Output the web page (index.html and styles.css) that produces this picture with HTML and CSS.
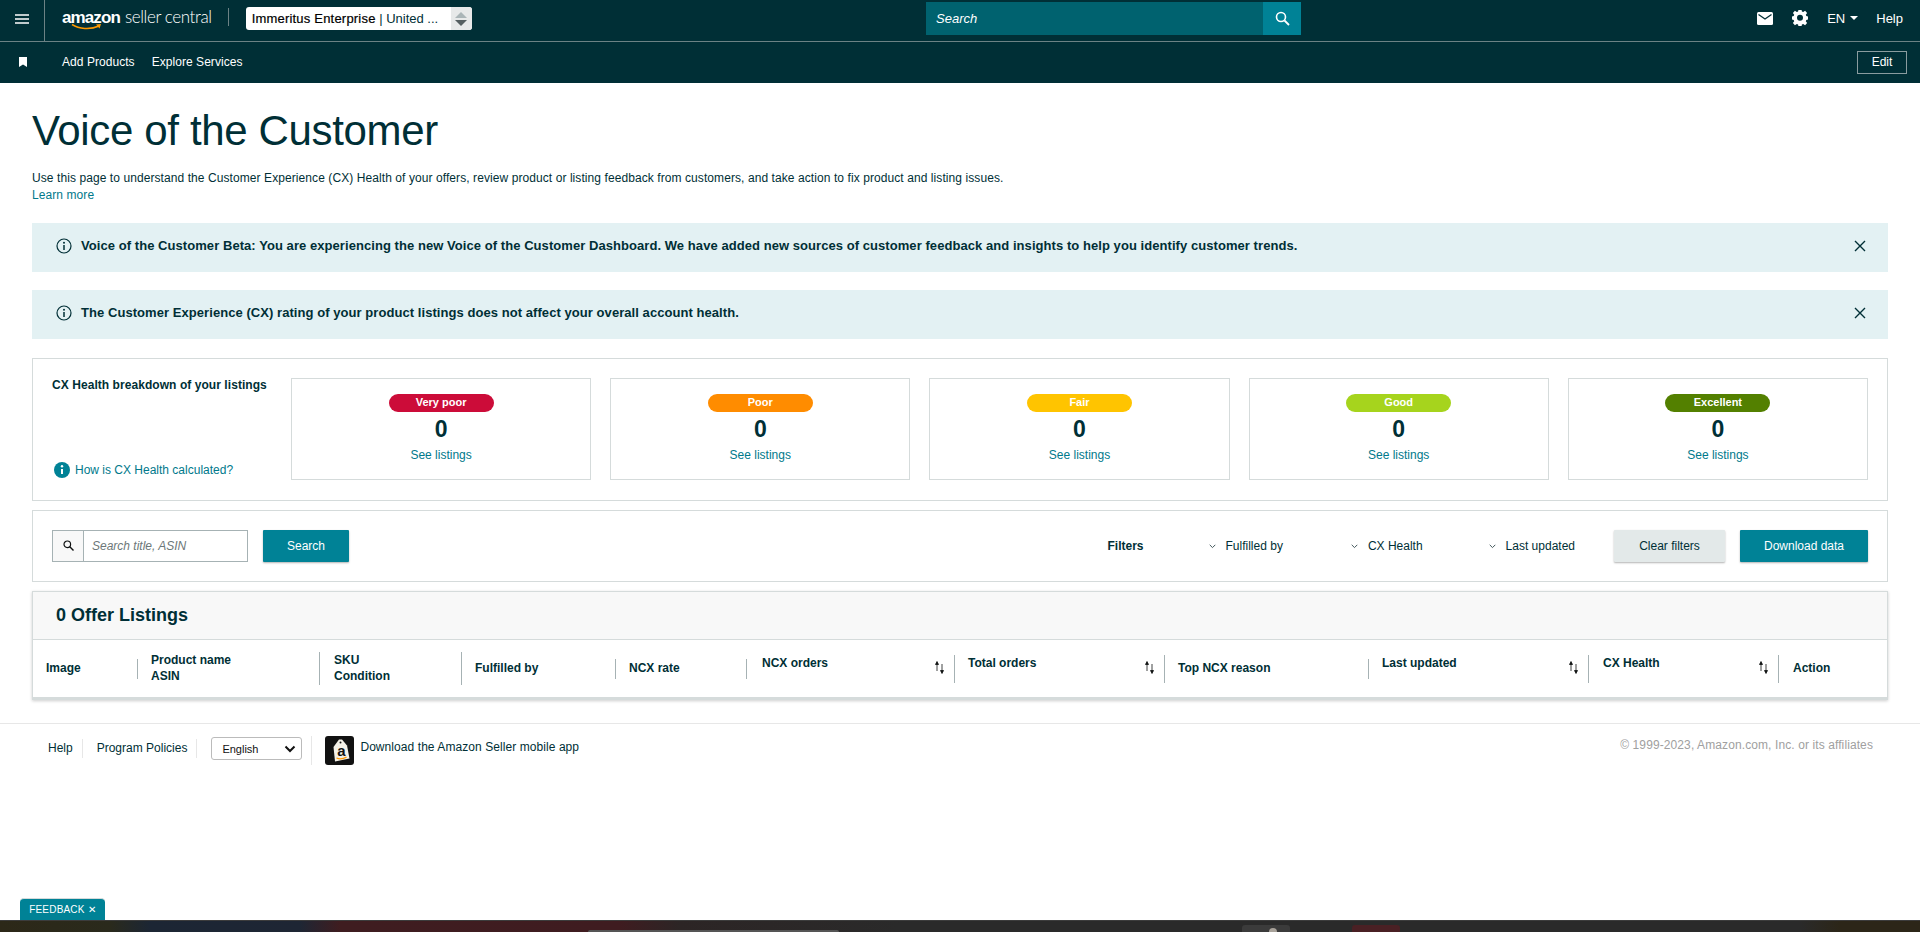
FILE: index.html
```html
<!DOCTYPE html>
<html lang="en">
<head>
  <meta charset="UTF-8">
  <title>Voice of the Customer</title>
  <link rel="stylesheet" href="styles.css">
</head>
<body>

<!-- top nav -->
<div class="header">
  <div class="header-top">
    <button class="menu-btn" aria-label="Menu">
      <svg width="14" height="10" viewBox="0 0 14 10"><path d="M0 1h14M0 5h14M0 9h14" stroke="#fff" stroke-width="1.6"/></svg>
    </button>
    <a href="#" class="logo">
      <b>amazon</b><span>seller central</span>
      <svg class="smile" width="32" height="8" viewBox="0 0 32 8"><path d="M1 1.500C8 6 19 7 28 3" fill="none" stroke="#f90" stroke-width="1.500"/><path d="M25 1.500l5-.5-1.500 4.500z" fill="#f90"/></svg>
    </a>
    <div class="account-select">
      <div class="account-name"><b>Immeritus Enterprise</b> | United ...</div>
      <div class="stepper"><i class="up"></i><i class="down"></i></div>
    </div>
    <div class="top-search">
      <div class="top-search-input">Search</div>
      <button class="top-search-btn" aria-label="Search">
        <svg width="15" height="15" viewBox="0 0 15 15"><circle cx="6" cy="6" r="4.500" fill="none" stroke="#fff" stroke-width="1.600"/><path d="M9.500 9.500l4.500 4.500" stroke="#fff" stroke-width="1.800"/></svg>
      </button>
    </div>
    <div class="top-right">
      <svg width="16" height="13" viewBox="0 0 16 13"><rect width="16" height="13" rx="1.500" fill="#fff"/><path d="M1.500 2.500L8 7l6.500-4.500" fill="none" stroke="#002f36" stroke-width="1.300"/></svg>
      <svg class="gear" width="16" height="16" viewBox="0 0 16 16"><path fill="#fff" fill-rule="evenodd" d="M6.500 0h3l.4 2.200 1.300.6L13.100 1.500l2 2.200-1.300 1.800.5 1.300 2.200.4v3l-2.200.4-.5 1.300 1.300 1.800-2 2.200-1.900-1.300-1.300.6-.4 2.200h-3l-.4-2.200-1.300-.6-1.900 1.300-2-2.200 1.300-1.800-.5-1.300L-.5 10.200v-3l2.200-.4.500-1.300L.9 3.700l2-2.200 1.900 1.300 1.300-.6zM8 5.500a3 3 0 1 0 0 6 3 3 0 0 0 0-6z" transform="translate(0 -.7)"/></svg>
      <span class="lang">EN<i class="caret"></i></span>
      <a href="#">Help</a>
    </div>
  </div>
  <div class="header-bottom">
    <svg class="bookmark" width="8" height="10" viewBox="0 0 8 10"><path d="M0 0h8v10L4 7.500 0 10z" fill="#fff"/></svg>
    <a href="#">Add Products</a>
    <a href="#">Explore Services</a>
    <button class="edit-btn">Edit</button>
  </div>
</div>

<div class="content">
  <h1>Voice of the Customer</h1>
  <p class="intro">Use this page to understand the Customer Experience (CX) Health of your offers, review product or listing feedback from customers, and take action to fix product and listing issues.<br><a href="#">Learn more</a></p>

  <div class="alert">
    <svg class="alert-icon" width="16" height="16" viewBox="0 0 16 16"><circle cx="8" cy="8" r="7" fill="none" stroke="#002f36" stroke-width="1.200"/><path d="M8 7v5" stroke="#002f36" stroke-width="1.500"/><circle cx="8" cy="4.700" r="1" fill="#002f36"/></svg>
    <span>Voice of the Customer Beta: You are experiencing the new Voice of the Customer Dashboard. We have added new sources of customer feedback and insights to help you identify customer trends.</span>
    <svg class="alert-close" width="12" height="12" viewBox="0 0 12 12"><path d="M1 1l10 10M11 1L1 11" stroke="#002f36" stroke-width="1.400"/></svg>
  </div>
  <div class="alert">
    <svg class="alert-icon" width="16" height="16" viewBox="0 0 16 16"><circle cx="8" cy="8" r="7" fill="none" stroke="#002f36" stroke-width="1.200"/><path d="M8 7v5" stroke="#002f36" stroke-width="1.500"/><circle cx="8" cy="4.700" r="1" fill="#002f36"/></svg>
    <span>The Customer Experience (CX) rating of your product listings does not affect your overall account health.</span>
    <svg class="alert-close" width="12" height="12" viewBox="0 0 12 12"><path d="M1 1l10 10M11 1L1 11" stroke="#002f36" stroke-width="1.400"/></svg>
  </div>

  <!-- CX health -->
  <div class="panel health">
    <div class="health-side">
      <b>CX Health breakdown of your listings</b>
      <a href="#" class="health-help">
        <svg width="16" height="16" viewBox="0 0 16 16"><circle cx="8" cy="8" r="8" fill="#008296"/><path d="M8 7v5" stroke="#fff" stroke-width="2"/><circle cx="8" cy="4.300" r="1.200" fill="#fff"/></svg>
        How is CX Health calculated?
      </a>
    </div>
    <div class="health-cards">
      <div class="health-card"><span class="pill very-poor">Very poor</span><strong>0</strong><a href="#">See listings</a></div>
      <div class="health-card"><span class="pill poor">Poor</span><strong>0</strong><a href="#">See listings</a></div>
      <div class="health-card"><span class="pill fair">Fair</span><strong>0</strong><a href="#">See listings</a></div>
      <div class="health-card"><span class="pill good">Good</span><strong>0</strong><a href="#">See listings</a></div>
      <div class="health-card"><span class="pill excellent">Excellent</span><strong>0</strong><a href="#">See listings</a></div>
    </div>
  </div>

  <!-- search and filters -->
  <div class="panel filters">
    <div class="search-box">
      <span class="search-addon">
        <svg width="11" height="11" viewBox="0 0 11 11"><circle cx="4.300" cy="4.300" r="3.300" fill="none" stroke="#0f1111" stroke-width="1.200"/><path d="M6.800 6.800L10.500 10.500" stroke="#0f1111" stroke-width="1.400"/></svg>
      </span>
      <span class="search-placeholder">Search title, ASIN</span>
    </div>
    <button class="btn btn-primary search-btn">Search</button>
    <b class="filters-label">Filters</b>
    <span class="filter"><svg width="7" height="5" viewBox="0 0 7 5"><path d="M.7.800L3.500 3.600 6.300.8" fill="none" stroke="#44585c" stroke-width="1"/></svg>Fulfilled by</span>
    <span class="filter filter-cx"><svg width="7" height="5" viewBox="0 0 7 5"><path d="M.7.800L3.500 3.600 6.300.8" fill="none" stroke="#44585c" stroke-width="1"/></svg>CX Health</span>
    <span class="filter filter-updated"><svg width="7" height="5" viewBox="0 0 7 5"><path d="M.7.800L3.500 3.600 6.300.8" fill="none" stroke="#44585c" stroke-width="1"/></svg>Last updated</span>
    <button class="btn btn-light">Clear filters</button>
    <button class="btn btn-primary download-btn">Download data</button>
  </div>

  <!-- listings table -->
  <div class="listings">
    <h2>0 Offer Listings</h2>
    <div class="listings-head">
      <div class="col short"><b>Image</b></div>
      <div class="col tall"><b>Product name<br>ASIN</b></div>
      <div class="col tall"><b>SKU<br>Condition</b></div>
      <div class="col short"><b>Fulfilled by</b></div>
      <div class="col short"><b>NCX rate</b></div>
      <div class="col mid sort"><b>NCX orders</b><svg width="11" height="14" viewBox="0 0 11 14"><path d="M3 11V3M1.500 4.500L3 1.500l1.500 3zM8 4v8M6.500 10.500l1.500 3 1.500-3z" fill="#0f1111" stroke="#0f1111" stroke-width=".8"/></svg></div>
      <div class="col mid sort"><b>Total orders</b><svg width="11" height="14" viewBox="0 0 11 14"><path d="M3 11V3M1.500 4.500L3 1.500l1.500 3zM8 4v8M6.500 10.500l1.500 3 1.500-3z" fill="#0f1111" stroke="#0f1111" stroke-width=".8"/></svg></div>
      <div class="col short"><b>Top NCX reason</b></div>
      <div class="col mid sort"><b>Last updated</b><svg width="11" height="14" viewBox="0 0 11 14"><path d="M3 11V3M1.500 4.500L3 1.500l1.500 3zM8 4v8M6.500 10.500l1.500 3 1.500-3z" fill="#0f1111" stroke="#0f1111" stroke-width=".8"/></svg></div>
      <div class="col mid sort"><b>CX Health</b><svg width="11" height="14" viewBox="0 0 11 14"><path d="M3 11V3M1.500 4.500L3 1.500l1.500 3zM8 4v8M6.500 10.500l1.500 3 1.500-3z" fill="#0f1111" stroke="#0f1111" stroke-width=".8"/></svg></div>
      <div class="col short last"><b>Action</b></div>
    </div>
  </div>
</div>

<div class="footer">
  <a href="#" class="footer-link">Help</a>
  <a href="#" class="footer-link">Program Policies</a>
  <div class="footer-lang">
    <span>English</span>
    <svg width="12" height="8" viewBox="0 0 12 8"><path d="M1.500 1.500L6 6l4.500-4.500" fill="none" stroke="#111" stroke-width="2"/></svg>
  </div>
  <a href="#" class="footer-app">
    <svg width="29" height="29" viewBox="0 0 29 29"><rect width="29" height="29" rx="3" fill="#111"/><path d="M8.500 11L14 3.500h3l5 6 2.500 13L10 25.500z" fill="#f4f1e8"/><circle cx="15.500" cy="6.500" r="1" fill="#111"/><text x="16.500" y="20" class="app-letter">a</text><path d="M11.500 22c3 1.300 6.500 1 10-.8" fill="none" stroke="#f90" stroke-width="1.300"/></svg>
    <span>Download the Amazon Seller mobile app</span>
  </a>
  <span class="copyright">© 1999-2023, Amazon.com, Inc. or its affiliates</span>
</div>

<button class="feedback">FEEDBACK ✕</button>

<!-- desktop showing under the browser window -->
<div class="desk-strip">
  <i class="desk-bar"></i>
  <i class="desk-tile grey"><u class="desk-glyph"></u></i>
  <i class="desk-tile red"></i>
</div>

</body>
</html>
```

FILE: styles.css
```css
:root {
  --ink: #002f36;
  --teal: #008296;
  --link: #00798b;
  --line: #d5dbdb;
}

* {
  box-sizing: border-box;
}

html, body {
  height: 100%;
}

body {
  margin: 0;
  height: 932px;
  overflow: hidden;
  display: flex;
  flex-direction: column;
  font-family: "Liberation Sans", Arial, sans-serif;
  font-size: 12px;
  color: var(--ink);
  background: #fff;
}

a {
  color: var(--link);
  text-decoration: none;
}

button {
  font-family: inherit;
  border: none;
  padding: 0;
}

/* header */
.header {
  background: var(--ink);
  color: #fff;
  height: 83px;
  flex: none;
}

.header a {
  color: #fff;
}

.header-top {
  height: 42px;
  display: flex;
  align-items: center;
  border-bottom: 1px solid #6c8285;
  position: relative;
}

.menu-btn {
  width: 45px;
  height: 41px;
  background: none;
  border-right: 1px solid #6c8285;
  display: flex;
  align-items: center;
  padding-left: 15px;
  padding-bottom: 3px;
}

.logo {
  position: relative;
  display: flex;
  align-items: baseline;
  margin-left: 17px;
  padding-right: 16px;
  height: 18px;
  line-height: 18px;
  margin-top: -8px;
  border-right: 1px solid #6c8285;
  white-space: nowrap;
}

.logo b {
  font-size: 17px;
  letter-spacing: -0.9px;
}

.logo span {
  font-family: Lato, sans-serif;
  font-weight: 300;
  font-size: 17px;
  letter-spacing: -0.4px;
  margin-left: 5px;
}

.smile {
  position: absolute;
  left: 9px;
  top: 15px;
}

.account-select {
  margin-left: 17px;
  margin-top: -4px;
  width: 226px;
  height: 23px;
  background: #fff;
  border-radius: 3px;
  display: flex;
  color: #0f1111;
  font-size: 13px;
  line-height: 23px;
  overflow: hidden;
}

.account-name {
  flex: 1;
  padding-left: 6px;
  white-space: nowrap;
  color: #002f36;
}

.account-name b {
  font-weight: 400;
  color: #000;
  letter-spacing: 0.2px;
  -webkit-text-stroke: 0.2px #000;
}

.stepper {
  width: 21px;
  background: #e7e9e9;
  display: flex;
  flex-direction: column;
  align-items: center;
  justify-content: center;
  gap: 2px;
}

.stepper i {
  width: 0;
  height: 0;
  border-left: 6px solid transparent;
  border-right: 6px solid transparent;
}

.stepper .up {
  border-bottom: 6px solid #aab5b7;
}

.stepper .down {
  border-top: 6px solid #555f61;
}

.top-search {
  position: absolute;
  left: 926px;
  top: 2px;
  width: 375px;
  height: 33px;
  display: flex;
}

.top-search-input {
  flex: 1;
  background: #00626f;
  font-style: italic;
  font-size: 13px;
  line-height: 33px;
  padding-left: 10px;
}

.top-search-btn {
  width: 38px;
  background: var(--teal);
  display: flex;
  align-items: center;
  justify-content: center;
}

.top-right {
  margin-left: auto;
  margin-top: -5px;
  display: flex;
  align-items: center;
  font-size: 13px;
  padding-right: 17px;
}

.gear {
  margin-left: 19px;
}

.lang {
  margin-left: 19px;
  display: flex;
  align-items: center;
}

.caret {
  margin-left: 5px;
  border-left: 4px solid transparent;
  border-right: 4px solid transparent;
  border-top: 4px solid #fff;
}

.top-right a {
  margin-left: 18px;
}

.header-bottom {
  height: 41px;
  display: flex;
  align-items: center;
  padding-left: 19px;
  font-size: 12px;
  letter-spacing: 0.05px;
}

.bookmark {
  margin-right: 35px;
  margin-bottom: 2px;
}

.header-bottom a {
  margin-right: 17px;
  margin-bottom: 2px;
}

.edit-btn {
  margin-left: auto;
  margin-right: 13px;
  width: 50px;
  height: 23px;
  padding-bottom: 2px;
  background: none;
  border: 1px solid #8a9c9f;
  color: #fff;
  font-size: 12px;
}

/* main */
.content {
  padding: 0 32px;
  flex: none;
}

h1 {
  margin: 24px 0 0;
  font-size: 42px;
  font-weight: 400;
  line-height: 48px;
  letter-spacing: -0.35px;
}

.intro {
  margin: 15px 0 0;
  font-size: 12px;
  line-height: 17px;
  height: 34px;
  letter-spacing: 0.08px;
}

.alert {
  margin-top: 18px;
  height: 49px;
  background: #e3f1f3;
  display: flex;
  align-items: center;
  padding-left: 24px;
  padding-bottom: 4px;
  font-size: 13px;
  font-weight: 700;
  letter-spacing: 0.06px;
}

.intro + .alert {
  margin-top: 19px;
}

.alert span {
  margin-left: 9px;
}

.alert-close {
  margin-left: auto;
  margin-right: 22px;
}

.panel {
  border: 1px solid var(--line);
  background: #fff;
}

.health {
  margin-top: 19px;
  height: 143px;
  display: flex;
  padding: 19px 19px 20px;
}

.health-side {
  width: 239px;
  display: flex;
  flex-direction: column;
  justify-content: space-between;
}

.health-side b {
  line-height: 15px;
  letter-spacing: 0.06px;
}

.health-help {
  display: flex;
  align-items: center;
  gap: 5px;
  margin-left: 2px;
  margin-bottom: 2px;
  font-size: 12px;
}

.health-cards {
  flex: 1;
  display: grid;
  grid-template-columns: repeat(5, 1fr);
  gap: 19px;
}

.health-card {
  border: 1px solid var(--line);
  display: flex;
  flex-direction: column;
  align-items: center;
  padding-top: 15px;
}

.pill {
  width: 105px;
  height: 18px;
  border-radius: 9px;
  color: #fff;
  font-size: 11px;
  font-weight: 700;
  line-height: 17px;
  text-align: center;
}

.very-poor { background: #cc0c39; }
.poor { background: #ff8c00; }
.fair { background: #ffc400; }
.good { background: #a6d41d; }
.excellent { background: #538000; }

.health-card strong {
  font-size: 23px;
  line-height: 27px;
  margin-top: 4px;
}

.health-card a {
  margin-top: 5px;
}

.filters {
  margin-top: 9px;
  height: 72px;
  display: flex;
  align-items: center;
  padding: 0 19px;
}

.search-box {
  width: 196px;
  height: 32px;
  border: 1px solid #a6b2b4;
  display: flex;
}

.search-addon {
  width: 31px;
  background: #f8f8f8;
  border-right: 1px solid #a6b2b4;
  display: flex;
  align-items: center;
  justify-content: center;
  padding-bottom: 2px;
}

.search-placeholder {
  font-style: italic;
  color: #6c7778;
  line-height: 30px;
  padding-left: 8px;
}

.btn {
  height: 32px;
  border-radius: 1px;
  font-size: 12px;
  box-shadow: 0 1px 2px rgba(0, 0, 0, 0.3);
}

.btn-primary {
  background: var(--teal);
  color: #fff;
}

.btn-light {
  background: #e3e9e9;
  color: var(--ink);
  width: 111px;
  margin-left: 39px;
}

.search-btn {
  width: 86px;
  margin-left: 15px;
}

.download-btn {
  width: 128px;
  margin-left: 15px;
}

.filters-label {
  margin-left: auto;
}

.filter {
  display: flex;
  align-items: center;
  gap: 10px;
  margin-left: 65px;
}

.filter-cx { margin-left: 68px; }
.filter-updated { margin-left: 66px; }

.listings {
  margin-top: 9px;
  height: 109px;
  border: 1px solid var(--line);
  border-bottom: 3px solid var(--line);
  box-shadow: 0 1px 3px rgba(0, 0, 0, 0.2);
}

h2 {
  margin: 0;
  height: 48px;
  padding-left: 23px;
  background: #f8f8f8;
  border-bottom: 1px solid var(--line);
  font-size: 18px;
  line-height: 46px;
}

.listings-head {
  display: grid;
  grid-template-columns: 105px 182px 142px 154px 131px 208px 210px 204px 220px 190px 1fr;
  height: 57px;
  align-items: center;
}

.col {
  display: flex;
  align-items: center;
  padding-left: 13px;
  border-right: 1px solid #a6b2b4;
  line-height: 16px;
}

.col:nth-child(3),
.col:nth-child(10),
.col:nth-child(11) {
  padding-left: 14px;
}

.col:nth-child(6) {
  padding-left: 15px;
}

.short { height: 20px; }
.tall { height: 33px; }
.mid { height: 28px; }
.last { border-right: none; }

.short b,
.tall b {
  margin-top: -2px;
}

.sort {
  justify-content: space-between;
  padding-right: 9px;
  align-items: flex-start;
}

.sort svg {
  margin-top: 5px;
}

/* footer */
.footer {
  margin-top: 23px;
  border-top: 1px solid #e7e7e7;
  padding: 12px 47px 0 48px;
  display: flex;
  align-items: center;
  font-size: 12px;
  height: 29px;
  flex: none;
  box-sizing: content-box;
}

.footer-link {
  color: var(--ink);
  padding-right: 9px;
  margin-right: 14px;
  margin-top: -4px;
  border-right: 1px solid #e7e7e7;
  line-height: 19px;
}

.footer-lang {
  width: 91px;
  height: 23px;
  margin-top: -4px;
  border: 1px solid #bbb;
  border-radius: 3px;
  display: flex;
  align-items: center;
  justify-content: space-between;
  padding: 0 5px 0 10px;
  font-size: 11px;
  color: #111;
}

.footer-app {
  margin-left: 9px;
  border-left: 1px solid #e7e7e7;
  padding-left: 13px;
  display: flex;
  gap: 6px;
  color: var(--ink);
  height: 29px;
  line-height: 17px;
  letter-spacing: 0.07px;
}

.footer-app span {
  padding-top: 3px;
}

.app-letter {
  font-family: "Liberation Sans", sans-serif;
  font-size: 15px;
  font-weight: 700;
  fill: #111;
  text-anchor: middle;
}

.copyright {
  margin-left: auto;
  color: #a0a0a0;
  padding-bottom: 12px;
  letter-spacing: 0.1px;
}

.feedback {
  position: absolute;
  left: 20px;
  top: 898px;
  width: 85px;
  height: 22px;
  background: var(--teal);
  border-top: 1px solid #d5dbdb;
  border-radius: 4px 4px 0 0;
  color: #fff;
  font-size: 10px;
  letter-spacing: 0.2px;
}

.desk-strip {
  margin-top: auto;
  height: 12px;
  flex: none;
  position: relative;
  border-top: 1px solid #3c3c3c;
  background: linear-gradient(90deg, #2c2818 0, #2a2a1c 110px, #1c2634 150px, #1e2634 300px, #3f1d20 340px, #3f1c20 620px, #2c2525 680px, #2a2a2a 900px, #2a2a2a 1800px, #2c2618 1840px);
}

.desk-strip i {
  position: absolute;
  display: block;
}

.desk-bar {
  left: 588px;
  top: 9px;
  width: 251px;
  height: 2px;
  background: #555;
  border-radius: 3px 3px 0 0;
}

.desk-tile {
  top: 4px;
  width: 48px;
  height: 7px;
  border-radius: 3px 3px 0 0;
  overflow: hidden;
}

.grey {
  left: 1242px;
  background: #3b3b3b;
}

.red {
  left: 1352px;
  background: #4a2024;
}

.desk-glyph {
  display: block;
  width: 8px;
  height: 8px;
  margin: 3px 0 0 27px;
  border-radius: 50%;
  background: #a8a29a;
}
```
